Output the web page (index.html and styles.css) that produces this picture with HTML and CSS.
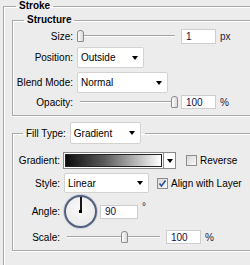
FILE: index.html
```html
<!DOCTYPE html>
<html lang="en">
<head>
    <meta charset="UTF-8">
    <title>Stroke</title>
    <link rel="stylesheet" href="styles.css">
</head>
<body>
    <fieldset class="group outer">
        <legend class="group-title">Stroke</legend>

        <fieldset class="group section structure">
            <legend class="group-title sub">Structure</legend>

            <div class="row row-size">
                <label class="label">Size:</label>
                <div class="slider"><div class="track"></div><div class="thumb" style="left:0px"></div></div>
                <input class="field" type="text" value="1">
                <span class="unit">px</span>
            </div>

            <div class="row row-position">
                <label class="label">Position:</label>
                <div class="dropdown dd-position"><span>Outside</span><i class="caret"></i></div>
            </div>

            <div class="row row-blend">
                <label class="label">Blend Mode:</label>
                <div class="dropdown dd-blend"><span>Normal</span><i class="caret"></i></div>
            </div>

            <div class="row row-opacity">
                <label class="label">Opacity:</label>
                <div class="slider"><div class="track"></div><div class="thumb" style="left:94px"></div></div>
                <input class="field" type="text" value="100">
                <span class="unit">%</span>
            </div>
        </fieldset>

        <fieldset class="group section fill">
            <legend class="fill-legend">
                <label>Fill Type:</label>
                <div class="dropdown dd-fill"><span>Gradient</span><i class="caret"></i></div>
            </legend>

            <div class="row row-gradient">
                <label class="label">Gradient:</label>
                <div class="gradient-picker">
                    <div class="gradient-swatch"></div>
                    <div class="gradient-arrow"><i class="caret"></i></div>
                </div>
                <span class="check"></span>
                <span class="check-text">Reverse</span>
            </div>

            <div class="row row-style">
                <label class="label">Style:</label>
                <div class="dropdown dd-style"><span>Linear</span><i class="caret"></i></div>
                <span class="check checked">
                    <svg width="9" height="9" viewBox="0 0 9 9"><path d="M1.5 4.5 L3.5 7 L7.5 1.5" fill="none" stroke="#2a4f9e" stroke-width="1.6"/></svg>
                </span>
                <span class="check-text">Align with Layer</span>
            </div>

            <div class="row row-angle">
                <label class="label">Angle:</label>
                <div class="dial"><span class="dial-hand"></span><span class="dial-dot"></span></div>
                <input class="field angle-field" type="text" value="90">
                <span class="unit degree">°</span>
            </div>

            <div class="row row-scale">
                <label class="label">Scale:</label>
                <div class="slider scale-slider"><div class="track"></div><div class="thumb" style="left:57px"></div></div>
                <input class="field" type="text" value="100">
                <span class="unit">%</span>
            </div>
        </fieldset>
    </fieldset>
</body>
</html>
```

FILE: styles.css
```css
body {
    margin: 0;
    background: #ececec;
    font-family: 'Liberation Sans', Arial, sans-serif;
    font-size: 10px;
    color: #000;
    overflow: hidden;
    width: 250px;
    height: 265px;
}
.group {
    margin: 0;
    min-width: 0;
    border: 1px solid #a9a9a9;
    border-right: none;
    box-shadow: inset 1px 1px 0 #fff, 0 1px 0 #fff;
}
.outer {
    box-sizing: border-box;
    margin-left: 3px;
    width: 247px;
    height: 265px;
    padding: 2px 0 0 8px;
    border-bottom: none;
}
.group-title {
    margin-left: 4px;
    padding: 0 3px;
    font-weight: bold;
    line-height: 12px;
}
.group-title.sub {
    margin-left: 11px;
}
.section {
    padding: 0;
}
.structure {
    padding: 2px 0 6px 0;
}
.fill {
    margin-top: 6px;
    padding: 8px 0 6px 0;
}
.row {
    display: flex;
    align-items: center;
    gap: 4px;
}
.label {
    text-align: right;
    flex: none;
}
.structure .label {
    width: 60px;
}
.fill .label {
    width: 47px;
}
.row-size {
    height: 16px;
}
.row-position {
    height: 21px;
    margin-top: 3px;
}
.row-blend {
    height: 21px;
    margin-top: 4px;
}
.row-opacity {
    height: 14px;
    margin-top: 2px;
}
.row-gradient {
    height: 17px;
}
.row-style {
    height: 20px;
    margin-top: 4px;
}
.row-angle {
    height: 33px;
    margin-top: 2px;
}
.row-scale {
    height: 14px;
    margin-top: 2px;
}
.slider {
    position: relative;
    width: 101px;
    height: 14px;
    flex: none;
}
.scale-slider {
    width: 99px;
}
.track {
    position: absolute;
    left: 3px;
    right: 3px;
    top: 6px;
    height: 1px;
    background: #a4a4a4;
    border-bottom: 1px solid #fff;
}
.thumb {
    position: absolute;
    top: 1px;
    width: 5px;
    height: 10px;
    border: 1px solid #8c8c8c;
    border-radius: 3px 3px 1px 1px;
    background: linear-gradient(to right, #fdfdfd, #d8d8d8);
}
.field {
    box-sizing: border-box;
    width: 35px;
    height: 14px;
    margin: 0 0 0 -1px;
    padding: 0 0 0 4px;
    border: 1px solid #cdcdcd;
    background: #fff;
    font-family: inherit;
    font-size: 10px;
    color: #101040;
    outline: none;
}
.row-size .field {
    height: 15px;
}
.unit {
    color: #202040;
}
.dropdown {
    box-sizing: border-box;
    height: 100%;
    display: flex;
    align-items: center;
    justify-content: space-between;
    padding: 0 5px 0 3px;
    border: 1px solid #d2d2d2;
    border-radius: 2px;
    background: #fff;
    flex: none;
}
.caret {
    width: 0;
    height: 0;
    border-left: 3.5px solid transparent;
    border-right: 3.5px solid transparent;
    border-top: 4px solid #000;
}
.dd-position {
    width: 67px;
}
.dd-blend {
    width: 91px;
}
.dd-fill {
    width: 71px;
    height: 22px;
}
.dd-style {
    width: 85px;
}
.fill-legend {
    display: flex;
    align-items: center;
    gap: 4px;
    margin-left: 10px;
    padding: 0 4px 0 3px;
    height: 22px;
}
.gradient-picker {
    box-sizing: border-box;
    display: flex;
    width: 113px;
    height: 17px;
    margin-left: -1px;
    border: 1px solid #8a8a8a;
    background: #fff;
    flex: none;
}
.gradient-swatch {
    flex: 1;
    margin: 1px;
    border: 1px solid #222;
    background: linear-gradient(to right, #0c0c0c, #5a5a5a 40%, #ffffff);
}
.gradient-arrow {
    width: 11px;
    display: flex;
    align-items: center;
    justify-content: center;
    border-left: 1px solid #8a8a8a;
}
.check {
    box-sizing: border-box;
    width: 11px;
    height: 11px;
    flex: none;
    display: flex;
    align-items: center;
    justify-content: center;
    border: 1px solid #8e8e8e;
    background: linear-gradient(135deg, #d6d6d6, #fbfbfb);
}
.row-gradient .check {
    margin-left: 6px;
}
.row-style .check {
    margin-left: 4px;
}
.check-text {
    margin-left: -1px;
}
.dial {
    position: relative;
    box-sizing: border-box;
    width: 33px;
    height: 33px;
    flex: none;
    border: 2px solid #51607c;
    border-radius: 50%;
    background: radial-gradient(circle at 50% 40%, #fafafa, #e6e6e6);
    box-shadow: 0 0 0 1px #c9cfdb;
}
.dial-hand {
    position: absolute;
    left: 13.5px;
    top: 0;
    width: 2px;
    height: 15px;
    background: #1a1a1a;
}
.dial-dot {
    position: absolute;
    left: 13px;
    top: 13px;
    width: 3px;
    height: 3px;
    background: #000;
}
.angle-field {
    width: 38px;
}
.degree {
    align-self: flex-start;
    margin-top: 6px;
}
```
